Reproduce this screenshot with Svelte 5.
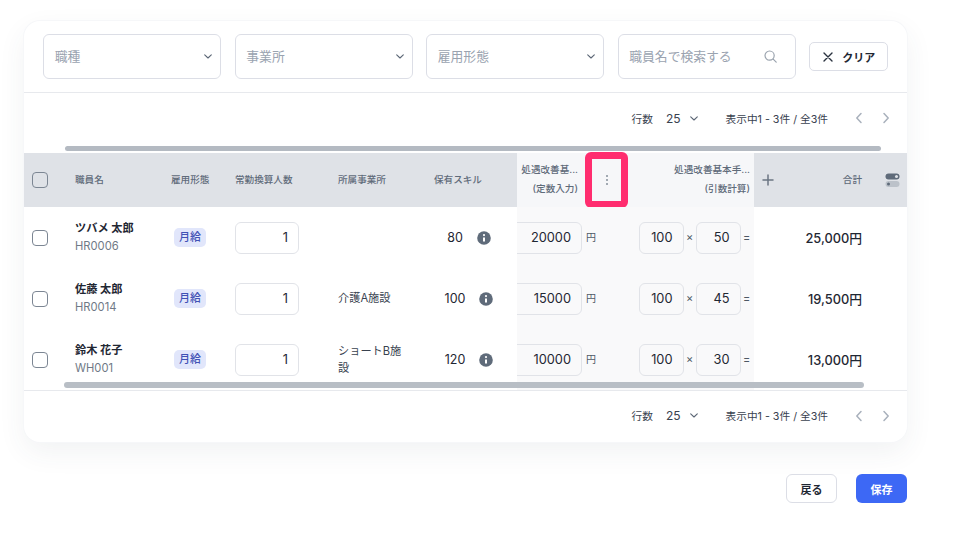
<script>
  const columns = ["職員名", "雇用形態", "常勤換算人数", "所属事業所", "保有スキル"];
  const staff = [
    { name: "ツバメ 太郎", code: "HR0006", office: "", skill: 80, base: 20000, a: 100, b: 50, total: "25,000円" },
    { name: "佐藤 太郎", code: "HR0014", office: "介護A施設", skill: 100, base: 15000, a: 100, b: 45, total: "19,500円" },
    { name: "鈴木 花子", code: "WH001", office: "ショートB施設", skill: 120, base: 10000, a: 100, b: 30, total: "13,000円" }
  ];
  const filters = ["職種", "事業所", "雇用形態"];
</script>

{#snippet chevron()}
  <svg class="chev" width="8" height="5" viewBox="0 0 8 5"><path d="M0.700 0.800L4 4 7.300 0.800" fill="none" stroke="#5b6675" stroke-width="1.100" stroke-linecap="round" stroke-linejoin="round"/></svg>
{/snippet}

{#snippet pager()}
  <div class="pager">
    <span class="rows-label">行数</span>
    <span class="rows-value">25</span>
    {@render chevron()}
    <span class="range">表示中1 - 3件 / 全3件</span>
    <svg class="arrow" width="8" height="12" viewBox="0 0 8 12"><path d="M6 1.500L1.800 6 6 10.500" fill="none" stroke="#a9b1bc" stroke-width="1.500" stroke-linecap="round" stroke-linejoin="round"/></svg>
    <svg class="arrow next" width="8" height="12" viewBox="0 0 8 12"><path d="M2 1.500L6.200 6 2 10.500" fill="none" stroke="#a9b1bc" stroke-width="1.500" stroke-linecap="round" stroke-linejoin="round"/></svg>
  </div>
{/snippet}

<div class="page">
  <div class="card">
    <div class="filters">
      {#each filters as f}
        <div class="select"><span class="hint">{f}</span>{@render chevron()}</div>
      {/each}
      <div class="select search">
        <span class="hint">職員名で検索する</span>
        <svg width="13" height="13" viewBox="0 0 13 13"><circle cx="5.600" cy="5.600" r="4.600" fill="none" stroke="#9aa3ae" stroke-width="1.200"/><path d="M9.200 9.200l3 3" stroke="#9aa3ae" stroke-width="1.200" stroke-linecap="round"/></svg>
      </div>
      <button class="clear">
        <svg width="10" height="10" viewBox="0 0 10 10"><path d="M1 1l8 8M9 1l-8 8" stroke="#2b3340" stroke-width="1.400" stroke-linecap="round"/></svg>
        クリア
      </button>
    </div>

    {@render pager()}

    <div class="scroll-top"><div class="thumb"></div></div>

    <div class="table">
      <div class="row head">
        <div class="cell check"><span class="box"></span></div>
        {#each columns as c}
          <div class="cell title">{c}</div>
        {/each}
        <div class="cell fixed">
          <div class="long first">処遇改善基...<br />(定数入力)</div>
          <div class="kebab">
            <svg width="4" height="12" viewBox="0 0 4 12"><g fill="#8d96a1"><circle cx="2" cy="2" r="1.100"/><circle cx="2" cy="6" r="1.100"/><circle cx="2" cy="10" r="1.100"/></g></svg>
          </div>
          <div class="long second">処遇改善基本手...<br />(引数計算)</div>
        </div>
        <div class="cell last">
          <svg class="plus" width="12" height="12" viewBox="0 0 12 12"><path d="M6 1v10M1 6h10" stroke="#6b7583" stroke-width="1.500" stroke-linecap="round"/></svg>
          <span class="sum">合計</span>
          <svg class="toggles" width="15" height="14" viewBox="0 0 15 14">
            <rect x="0.500" y="0.500" width="14" height="6" rx="3" fill="#5f6b7a"/><circle cx="11.500" cy="3.500" r="1.500" fill="#dfe2e7"/>
            <rect x="0.500" y="8" width="14" height="6" rx="3" fill="#bcc2ca"/><circle cx="3.500" cy="11" r="1.500" fill="#5f6b7a"/>
          </svg>
        </div>
      </div>

      {#each staff as s}
        <div class="row">
          <div class="cell check"><span class="box"></span></div>
          <div class="cell name">
            <strong>{s.name}</strong>
            <small>{s.code}</small>
          </div>
          <div class="cell"><span class="badge">月給</span></div>
          <div class="cell"><input class="num count" value="1" /></div>
          <div class="cell office">{s.office}</div>
          <div class="cell skill">
            <span class="score">{s.skill}</span>
            <svg width="14" height="14" viewBox="0 0 14 14"><circle cx="7" cy="7" r="6.800" fill="#5f6b7a"/><circle cx="7" cy="4.100" r="1.100" fill="#fff"/><path d="M7 6.400v4" stroke="#fff" stroke-width="2"/></svg>
          </div>
          <div class="cell fixed body">
            <input class="num base" value={s.base} />
            <span class="unit">円</span>
            <input class="num factor" value={s.a} />
            <span class="op times">×</span>
            <input class="num factor" value={s.b} />
            <span class="op">=</span>
          </div>
          <div class="cell total">{s.total}</div>
        </div>
      {/each}
      <div class="scroll-bottom"></div>
    </div>

    <div class="foot">{@render pager()}</div>
  </div>

  <div class="actions">
    <button class="back">戻る</button>
    <button class="save">保存</button>
  </div>
</div>

<style>
  :global(body) {
    background: #fff;
  }

  .page {
    width: 963px;
    height: 534px;
    box-sizing: border-box;
    padding: 21px 56px 0 24px;
    font-family: Inter, "Noto Sans CJK JP", sans-serif;
    color: #1f2733;
    overflow: hidden;
  }

  .card {
    height: 421px;
    background: #fff;
    border-radius: 16px;
    box-shadow: 0 0 0 1px #f6f7f9, 0 10px 28px rgba(60, 70, 90, 0.07);
    overflow: hidden;
  }

  .filters {
    display: flex;
    align-items: center;
    height: 71px;
    padding: 0 19.300px;
    gap: 13.300px;
    border-bottom: 1px solid #e7e9ed;
  }

  .select {
    display: flex;
    align-items: center;
    justify-content: space-between;
    flex: none;
    width: 178.200px;
    height: 45px;
    box-sizing: border-box;
    padding: 0 8px 0 10.500px;
    border: 1px solid #dcdee6;
    border-radius: 6px;
    font-size: 12.800px;
    color: #9aa3b0;
  }

  .hint {
    padding-bottom: 2px;
  }

  .search {
    padding-right: 18px;
  }

  .clear {
    display: flex;
    align-items: center;
    flex: none;
    gap: 9px;
    width: 79px;
    height: 29px;
    padding: 0 0 0 13px;
    background: #fff;
    border: 1px solid #dcdee6;
    border-radius: 5px;
    font: 700 11px Inter, "Noto Sans CJK JP", sans-serif;
    color: #1f2733;
  }

  .pager {
    display: flex;
    align-items: center;
    justify-content: flex-end;
    height: 50px;
    padding-right: 17px;
    font-size: 10.700px;
    color: #39424f;
  }

  .rows-value {
    margin: 0 9px 0 13px;
    font-size: 12px;
  }

  .range {
    margin: 0 27px 0 28px;
  }

  .arrow.next {
    margin-left: 19px;
  }

  .scroll-top {
    height: 6px;
    padding: 3px 0 0 41px;
  }

  .thumb {
    width: 816px;
    height: 5px;
    background: #b4bac2;
    border-radius: 3px;
  }

  .table {
    position: relative;
  }

  .row {
    display: grid;
    grid-template-columns: 51px 96px 64px 103px 96px 83px 237px 1fr;
    height: 61px;
  }

  .head {
    height: 54px;
    margin-top: 1px;
    background: #dfe2e7;
    font-size: 9.600px;
    font-weight: 500;
    color: #5f6b7a;
  }

  .cell {
    display: flex;
    align-items: center;
  }

  .title {
    padding-bottom: 2px;
  }

  .check {
    padding-left: 8px;
  }

  .box {
    box-sizing: border-box;
    width: 16px;
    height: 16px;
    border: 1.300px solid #7c8693;
    border-radius: 4px;
  }

  .fixed {
    background: #f9f9fa;
    overflow: hidden;
  }

  .head .fixed {
    background: #f6f7f9;
    align-items: stretch;
    overflow: visible;
  }

  .long {
    margin-bottom: 2px;
    text-align: right;
    line-height: 19px;
    align-self: center;
    white-space: nowrap;
  }

  .first {
    width: 61px;
  }

  .second {
    width: 122px;
  }

  .kebab {
    display: flex;
    align-items: center;
    justify-content: center;
    box-sizing: border-box;
    width: 43px;
    margin: -1px 0 -1px 7px;
    border: 7px solid #ff2d6f;
    border-radius: 6px;
  }

  .last {
    position: relative;
    justify-content: flex-end;
    padding-right: 45px;
  }

  .sum {
    padding-bottom: 2px;
  }

  .plus {
    position: absolute;
    left: 8px;
  }

  .toggles {
    position: absolute;
    right: 7px;
  }

  .name {
    flex-direction: column;
    align-items: flex-start;
    justify-content: center;
    padding-bottom: 2px;
  }

  .name strong {
    font-size: 11.200px;
    line-height: 18px;
    font-weight: 700;
  }

  .name small {
    font-size: 11.200px;
    line-height: 18px;
    color: #6f7986;
  }

  .badge {
    margin-left: 3px;
    padding: 0 5px;
    line-height: 19px;
    font-size: 11px;
    font-weight: 500;
    color: #3f51b5;
    background: #e1e6fb;
    border-radius: 5px;
  }

  .num {
    box-sizing: border-box;
    height: 32px;
    padding: 0 10px;
    background: transparent;
    border: 1px solid #e1e3e8;
    border-radius: 6px;
    text-align: right;
    font: 400 12.800px Inter, "Noto Sans CJK JP", sans-serif;
    color: #1f2733;
  }

  .count {
    width: 64px;
    background: #fff;
  }

  .office {
    font-size: 11.200px;
    line-height: 17px;
    color: #39424f;
    padding-right: 28px;
  }

  .skill {
    justify-content: center;
    gap: 14px;
    padding-right: 13px;
    font-size: 12.500px;
  }

  .body .base {
    width: 75px;
    margin-left: -10px;
    flex: none;
  }

  .unit {
    margin: 0 43px 0 4px;
    padding-bottom: 3px;
    font-size: 10px;
    color: #4d5764;
  }

  .factor {
    flex: none;
    width: 44.500px;
  }

  .op {
    width: 12.500px;
    padding-bottom: 1px;
    text-align: center;
    font-size: 11px;
    color: #4d5764;
  }

  .total {
    justify-content: flex-end;
    padding-right: 45px;
    font-size: 12.800px;
    font-weight: 500;
  }

  .scroll-bottom {
    position: absolute;
    left: 40px;
    bottom: 2px;
    width: 800px;
    height: 6px;
    background: #b4bac2;
    opacity: 0.95;
    border-radius: 3px;
  }

  .foot {
    border-top: 1px solid #e7e9ed;
  }

  .foot .pager {
    height: 49px;
  }

  .actions {
    display: flex;
    justify-content: flex-end;
    gap: 19px;
    margin-top: 32px;
  }

  .actions button {
    width: 51px;
    height: 29px;
    padding: 0;
    border-radius: 6px;
    font: 700 11px Inter, "Noto Sans CJK JP", sans-serif;
  }

  .back {
    background: #fff;
    border: 1px solid #dcdee6;
    color: #1f2733;
  }

  .save {
    background: #3d68f5;
    border: none;
    color: #fff;
  }
</style>
